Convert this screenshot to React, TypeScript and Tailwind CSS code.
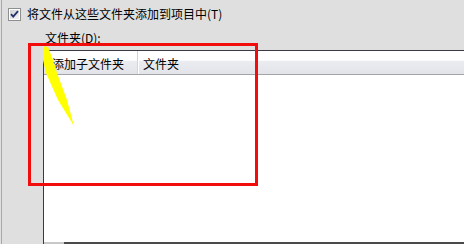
import React from "react";

export default function App() {
  return (
    <div
      className="relative w-[464px] h-[244px] overflow-hidden bg-[#dfdfdf] text-[12px] leading-[14px] text-black"
      style={{ fontFamily: '"Noto Sans CJK SC", "Noto Sans", sans-serif' }}
    >
      <div className="ml-px h-full border-l border-[#a9a9a9] flex flex-col">
        {/* checkbox row */}
        <div className="flex items-center pt-[8px] pl-[6px] h-[21px]">
          <svg width="13" height="13" viewBox="0 0 13 13" className="shrink-0">
            <defs>
              <linearGradient id="cbg" x1="0" y1="0" x2="1" y2="1">
                <stop offset="0" stopColor="#cfd1d6" />
                <stop offset="1" stopColor="#f4f4f6" />
              </linearGradient>
            </defs>
            <rect x="0.5" y="0.5" width="12" height="12" fill="#ffffff" stroke="#8e8f8f" />
            <rect x="2" y="2" width="9" height="9" fill="url(#cbg)" />
            <path d="M3 6.2 L5.2 8.6 L10 3.2" fill="none" stroke="#23316a" strokeWidth="1.8" />
          </svg>
          <span className="ml-[6px] mt-[-1px]">将文件从这些文件夹添加到项目中(T)</span>
        </div>
        {/* label */}
        <div className="pl-[43px] mt-[10px] h-[19px]">文件夹(D):</div>
        {/* list box */}
        <div className="ml-[41px] flex-1 border-t border-l border-[#3a3a44] bg-white flex flex-col">
          <div className="h-[24px] flex border-b border-[#a3a3a8] bg-[linear-gradient(#ffffff_0%,#ffffff_40%,#eaecf0_45%,#e2e4e9_100%)]">
            <div className="w-[94px] pl-[8px] flex items-center pt-[2px] border-r border-[#d2d4d8]">
              添加子文件夹
            </div>
            <div className="pl-[4px] flex items-center pt-[2px] border-l border-white">文件夹</div>
          </div>
          <div className="flex-1" />
          <div className="h-[2px] flex">
            <div className="w-[20px] bg-[#c8c8c8]" />
            <div className="flex-1 bg-[#4a4a4a]" />
          </div>
        </div>
      </div>

      {/* red highlight rectangle */}
      <div className="absolute left-[28px] top-[43px] w-[230px] h-[143px] border-[3px] border-[#f20d0d]" />

      {/* yellow arrow */}
      <svg className="absolute left-0 top-0" width="464" height="244" viewBox="0 0 464 244">
        <polygon
          points="43,46 48,47 53,60 57,73 67,100 74,126 58,100 46,73 43,60"
          fill="#ffff00"
        />
      </svg>
    </div>
  );
}
